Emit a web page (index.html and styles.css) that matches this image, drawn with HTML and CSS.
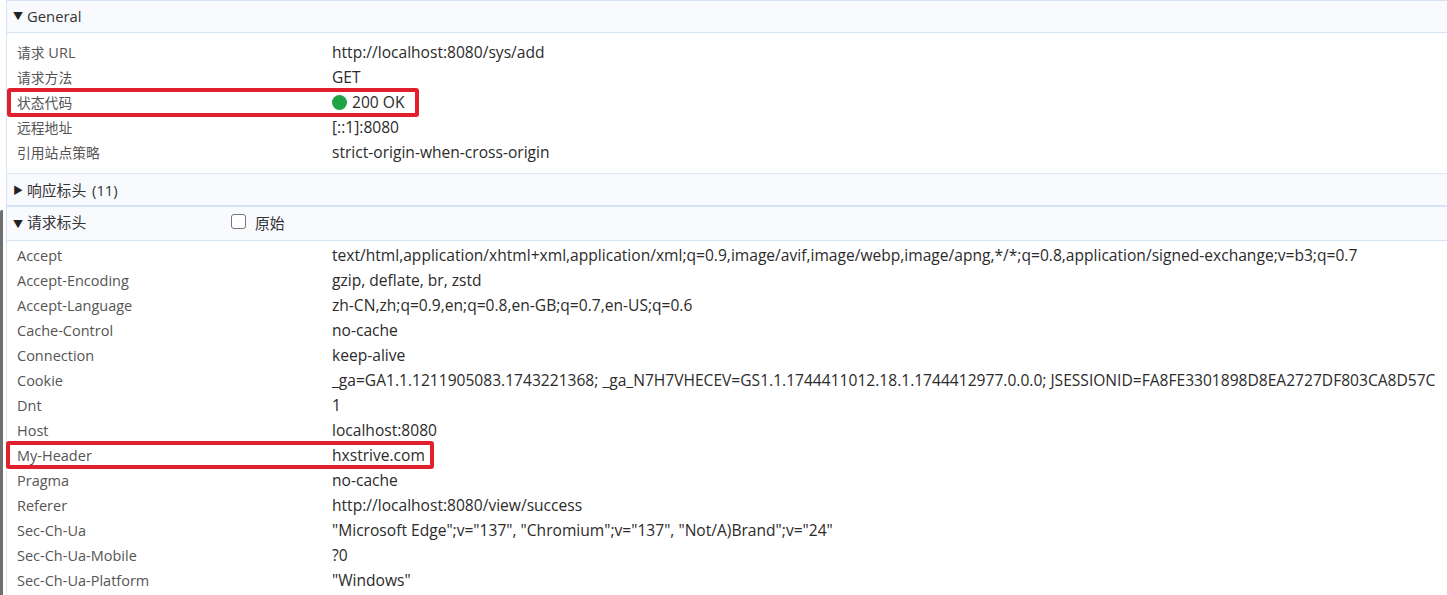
FILE: index.html
```html
<!DOCTYPE html>
<html lang="zh-CN">
<head>
    <meta charset="UTF-8">
    <title>标头</title>
    <link rel="stylesheet" href="styles.css">
</head>
<body>

<div class="scrollbar"></div>

<div class="panel">
    <div class="section-head head-first">
        <span class="arrow">▼</span>General
    </div>
    <div class="rows rows-general">
        <div class="row"><span class="name"><span class="cjk">请求</span> URL</span><span class="value">http://localhost:8080/sys/add</span></div>
        <div class="row"><span class="name cjk">请求方法</span><span class="value">GET</span></div>
        <div class="row"><span class="name cjk">状态代码</span><span class="value"><i class="dot"></i>200 OK</span><div class="mark mark-status"></div></div>
        <div class="row"><span class="name cjk">远程地址</span><span class="value">[::1]:8080</span></div>
        <div class="row"><span class="name cjk">引用站点策略</span><span class="value">strict-origin-when-cross-origin</span></div>
    </div>

    <div class="section-head head-closed">
        <span class="arrow">▶</span>响应标头 (11)
    </div>

    <div class="section-head head-request">
        <span class="head-title"><span class="arrow">▼</span>请求标头</span>
        <label class="raw"><i class="check"></i>原始</label>
    </div>
    <div class="rows">
        <div class="row"><span class="name">Accept</span><span class="value">text/html,application/xhtml+xml,application/xml;q=0.9,image/avif,image/webp,image/apng,*/*;q=0.8,application/signed-exchange;v=b3;q=0.7</span></div>
        <div class="row"><span class="name">Accept-Encoding</span><span class="value">gzip, deflate, br, zstd</span></div>
        <div class="row"><span class="name">Accept-Language</span><span class="value">zh-CN,zh;q=0.9,en;q=0.8,en-GB;q=0.7,en-US;q=0.6</span></div>
        <div class="row"><span class="name">Cache-Control</span><span class="value">no-cache</span></div>
        <div class="row"><span class="name">Connection</span><span class="value">keep-alive</span></div>
        <div class="row"><span class="name">Cookie</span><span class="value">_ga=GA1.1.1211905083.1743221368; _ga_N7H7VHECEV=GS1.1.1744411012.18.1.1744412977.0.0.0; JSESSIONID=FA8FE3301898D8EA2727DF803CA8D57C</span></div>
        <div class="row"><span class="name">Dnt</span><span class="value">1</span></div>
        <div class="row"><span class="name">Host</span><span class="value">localhost:8080</span></div>
        <div class="row"><span class="name">My-Header</span><span class="value">hxstrive.com</span><div class="mark mark-header"></div></div>
        <div class="row"><span class="name">Pragma</span><span class="value">no-cache</span></div>
        <div class="row"><span class="name">Referer</span><span class="value">http://localhost:8080/view/success</span></div>
        <div class="row"><span class="name">Sec-Ch-Ua</span><span class="value">"Microsoft Edge";v="137", "Chromium";v="137", "Not/A)Brand";v="24"</span></div>
        <div class="row"><span class="name">Sec-Ch-Ua-Mobile</span><span class="value">?0</span></div>
        <div class="row"><span class="name">Sec-Ch-Ua-Platform</span><span class="value">"Windows"</span></div>
    </div>
</div>

</body>
</html>
```

FILE: styles.css
```css
html, body {
    margin: 0;
    height: 595px;
    overflow: hidden;
}
body {
    background-color: #fff;
    font-family: "Open Sans", "Noto Sans CJK SC", sans-serif;
    font-size: 14px;
    color: #2b2b2b;
}
.scrollbar {
    position: absolute;
    left: 0;
    top: 210px;
    width: 3px;
    height: 385px;
    background-color: #6f6f6f;
    border-radius: 2px 0 0 0;
}
.panel {
    margin-left: 6px;
    border-left: 1px solid #d6e2f5;
}
.section-head {
    display: flex;
    align-items: center;
    background-color: #f8fafe;
    padding-left: 6px;
    box-sizing: border-box;
    font-size: 14.8px;
    color: #333;
}
.head-first {
    height: 33px;
    padding-bottom: 2px;
    border-top: 1px solid #d6e2f5;
    border-bottom: 1px solid #d6e2f5;
}
.head-closed {
    height: 34px;
    padding-bottom: 1px;
    word-spacing: 2px;
    border-top: 1px solid #dfe7f5;
    border-bottom: 2px solid #d6e2f5;
}
.head-request {
    height: 34px;
    padding-bottom: 4px;
    border-bottom: 1px solid #d6e2f5;
}
.head-title {
    width: 218px;
}
.arrow {
    display: inline-block;
    width: 14px;
    font-size: 10px;
    color: #222;
}
.raw {
    display: flex;
    align-items: center;
    padding-top: 2px;
}
.check {
    width: 15px;
    height: 15px;
    box-sizing: border-box;
    margin: -2px 9px 0 0;
    border: 1px solid #767676;
    border-radius: 3px;
    background-color: #fff;
}
.rows {
    padding: 2px 0 0;
}
.rows-general {
    padding: 7px 0 8px;
}
.row {
    position: relative;
    display: flex;
    height: 25px;
    line-height: 25px;
    white-space: nowrap;
}
.name {
    width: 315px;
    padding-left: 10px;
    flex-shrink: 0;
    font-size: 14.5px;
    color: #555;
}
.cjk {
    font-size: 13.8px;
}
.value {
    display: flex;
    align-items: center;
    font-size: 15.58px;
    color: #2b2b2b;
}
.dot {
    width: 15px;
    height: 15px;
    margin-right: 5px;
    border-radius: 50%;
    background-color: #1ea446;
}
/* red marks from the screenshot */
.mark {
    position: absolute;
    top: -2px;
    box-sizing: border-box;
    border: 4px solid #e11f2d;
    border-radius: 3px;
}
.mark-status {
    left: 0;
    width: 412px;
    height: 29px;
}
.mark-header {
    left: -1px;
    width: 428px;
    height: 28px;
}
```
